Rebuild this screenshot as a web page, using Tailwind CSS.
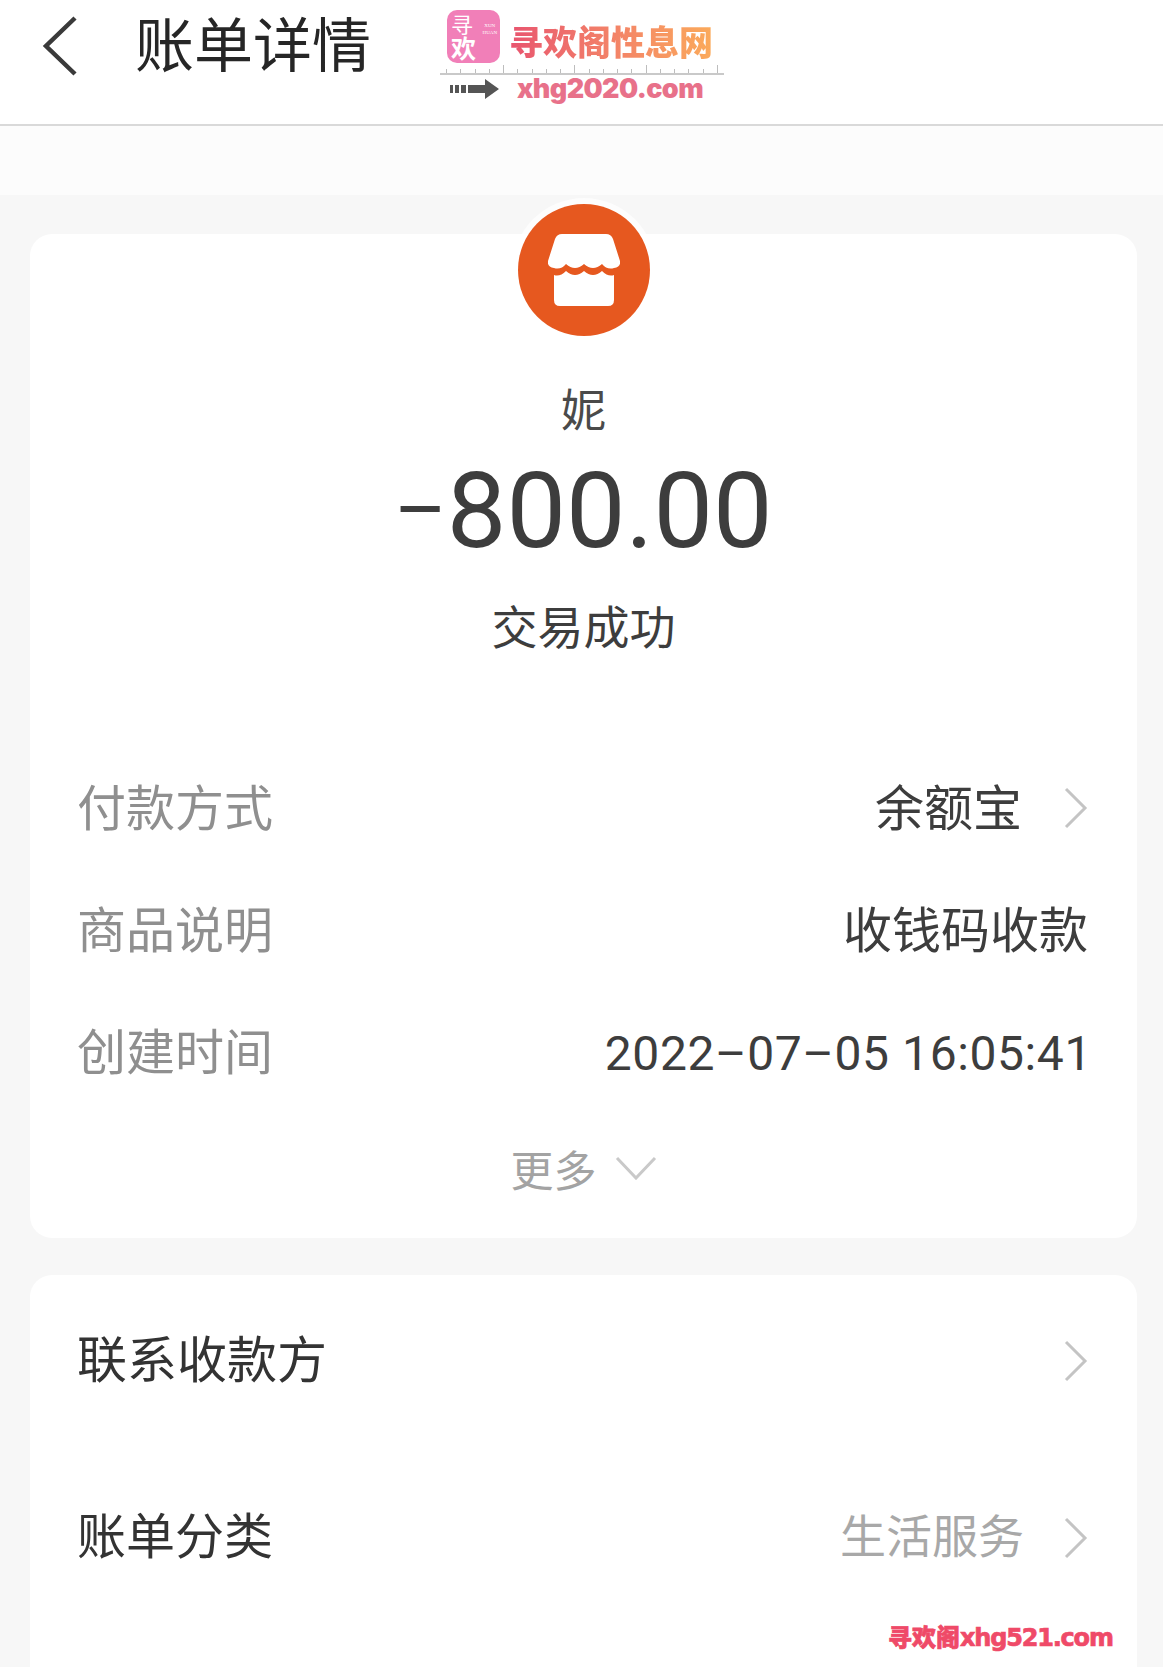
<!DOCTYPE html>
<html lang="zh-CN">
<head>
  <meta charset="UTF-8" />
  <meta name="viewport" content="width=device-width, initial-scale=1.0">
  <title>账单详情</title>
  <script src="https://cdn.jsdelivr.net/npm/@tailwindcss/browser@4"></script>
</head>
<body class="bg-[#f7f7f7] font-['Roboto','Noto_Sans_CJK_SC',sans-serif]">
  <div class="relative w-[1163px] h-[1667px] overflow-hidden">

    <!-- header -->
    <header class="h-[126px] bg-white border-b-2 border-[#d9d9d9] flex items-start pt-[11px]">
      <svg class="ml-[42px] mt-[5px] w-[36px] h-[60px]" viewBox="0 0 36 60" fill="none" stroke="#3a3a3a" stroke-width="4.5">
        <path d="M33 2 L4 30 L33 58" />
      </svg>
      <h1 class="ml-[57px] text-[59px] leading-[62px] text-[#262626] font-['Noto_Sans_CJK_SC',sans-serif]">账单详情</h1>
    </header>
    <div class="h-[69px] bg-[#fcfcfc]"></div>

    <!-- watermark logo -->
    <div class="absolute left-[440px] top-[10px] w-[284px]">
      <div class="flex items-center pl-[7px] gap-[9px]">
        <div class="relative w-[53px] h-[53px] rounded-[10px] bg-[#f17fb8] text-white font-['Noto_Sans_CJK_SC',sans-serif] flex flex-col pl-[4px] pt-[2px]">
          <span class="text-[22px] leading-[23px]">寻</span>
          <span class="text-[25px] leading-[25px] font-bold">欢</span>
          <span class="absolute right-[3px] top-[12px] text-[5px] leading-[7px] text-center font-['Liberation_Serif',serif]">XUN<br>HUAN</span>
        </div>
        <span class="mt-[9px] text-[34px] leading-[40px] font-black font-['Noto_Sans_CJK_SC',sans-serif] text-transparent bg-clip-text bg-gradient-to-r from-[#e8546f] to-[#fbaa5a] whitespace-nowrap">寻欢阁性息网</span>
      </div>
      <div class="mt-[4px] h-[8px] border-b-2 border-[#c9c9c9] flex justify-between items-end px-[6px]">
        <i class="block w-px h-[4px] bg-[#bdbdbd]"></i><i class="block w-px h-[4px] bg-[#bdbdbd]"></i><i class="block w-px h-[4px] bg-[#bdbdbd]"></i><i class="block w-px h-[4px] bg-[#bdbdbd]"></i><i class="block w-px h-[8px] bg-[#bdbdbd]"></i><i class="block w-px h-[4px] bg-[#bdbdbd]"></i><i class="block w-px h-[4px] bg-[#bdbdbd]"></i><i class="block w-px h-[4px] bg-[#bdbdbd]"></i><i class="block w-px h-[4px] bg-[#bdbdbd]"></i><i class="block w-px h-[8px] bg-[#bdbdbd]"></i><i class="block w-px h-[4px] bg-[#bdbdbd]"></i><i class="block w-px h-[4px] bg-[#bdbdbd]"></i><i class="block w-px h-[4px] bg-[#bdbdbd]"></i><i class="block w-px h-[4px] bg-[#bdbdbd]"></i><i class="block w-px h-[8px] bg-[#bdbdbd]"></i><i class="block w-px h-[4px] bg-[#bdbdbd]"></i><i class="block w-px h-[4px] bg-[#bdbdbd]"></i><i class="block w-px h-[4px] bg-[#bdbdbd]"></i><i class="block w-px h-[4px] bg-[#bdbdbd]"></i><i class="block w-px h-[8px] bg-[#bdbdbd]"></i>
      </div>
      <div class="flex items-center pl-[10px] -mt-[1px]">
        <svg class="w-[50px] h-[20px]" viewBox="0 0 50 20" fill="#555555">
          <path d="M0 6h3v8H0zM5 6h4v8H5zM11 6h5v8h-5zM18 6h17V0l14 10-14 10v-6H18z" />
        </svg>
        <span class="ml-[17px] text-[27px] leading-[30px] font-black text-[#e8718a] font-['Inter',sans-serif] tracking-[-0.6px]">xhg2020.com</span>
      </div>
    </div>

    <main class="pl-[30px] pr-[26px] pt-[39px]">
      <!-- bill card -->
      <section class="h-[1004px] bg-white rounded-[22px] flex flex-col">
        <div class="flex flex-col items-center">
          <div class="-mt-[30px] w-[132px] h-[132px] rounded-full bg-[#e6581f] ring-[6px] ring-white/70 flex items-center justify-center">
            <svg class="w-[72px] h-[72px]" viewBox="0 0 72 72">
              <path fill="#ffffff" d="M14 0H58Q63 0 65 5L72 27Q73 33 66 34Q59 36 54 30Q45 38 36 30Q27 38 18 30Q13 36 6 34Q-1 33 0 27L7 5Q9 0 14 0Z" />
              <path fill="#ffffff" d="M6 41Q12 43 18 37Q27 45 36 37Q45 45 54 37Q60 43 66 41V66Q66 72 60 72H12Q6 72 6 66Z" />
            </svg>
          </div>
          <p class="mt-[37px] text-[45px] leading-[70px] text-[#4a4a4a] font-['Noto_Sans_CJK_SC',sans-serif]">妮</p>
          <p class="mt-[8px] text-[106px] leading-[120px] text-[#3d3d3d]"><span class="inline-block -translate-y-[10px] text-[80px]">–</span>800.00</p>
          <p class="mt-[12px] text-[46px] leading-[64px] text-[#3d3d3d] font-['Noto_Sans_CJK_SC',sans-serif]">交易成功</p>
        </div>

        <dl class="mt-[88px] pl-[47px] pr-[49px] text-[49px] leading-[122px] font-['Noto_Sans_CJK_SC',sans-serif]">
          <div class="flex justify-between items-center">
            <dt class="text-[#8f8f8f]">付款方式</dt>
            <dd class="flex items-center text-[#3d3d3d]">余额宝
              <svg class="ml-[42px] w-[24px] h-[42px] translate-y-[3px]" viewBox="0 0 24 42" fill="none" stroke="#c4c4c4" stroke-width="3"><path d="M2 2 L21 21 L2 40" /></svg>
            </dd>
          </div>
          <div class="flex justify-between items-center">
            <dt class="text-[#8f8f8f]">商品说明</dt>
            <dd class="text-[#3d3d3d]">收钱码收款</dd>
          </div>
          <div class="flex justify-between items-center">
            <dt class="text-[#8f8f8f]">创建时间</dt>
            <dd class="text-[48px] text-[#3d3d3d] font-['Roboto',sans-serif] tracking-[0.6px] translate-x-[4px] translate-y-[5px]">2022–07–05 16:05:41</dd>
          </div>
        </dl>

        <div class="mt-[1px] flex justify-center items-center text-[43px] leading-[114px] text-[#a3a3a3] font-['Noto_Sans_CJK_SC',sans-serif]">
          更多
          <svg class="ml-[18px] w-[42px] h-[24px]" viewBox="0 0 42 24" fill="none" stroke="#c9c9c9" stroke-width="3"><path d="M2 2 L21 22 L40 2" /></svg>
        </div>
      </section>

      <!-- actions card -->
      <section class="mt-[37px] bg-white rounded-[22px] pl-[47px] pr-[49px] pt-[25px] h-[500px] text-[49px] font-['Noto_Sans_CJK_SC',sans-serif] text-[#333333]">
        <div class="h-[112px] flex justify-between items-center">
          <span class="text-[50px]">联系收款方</span>
          <svg class="w-[24px] h-[42px] translate-y-[5px]" viewBox="0 0 24 42" fill="none" stroke="#c4c4c4" stroke-width="3"><path d="M2 2 L21 21 L2 40" /></svg>
        </div>
        <div class="mt-[65px] h-[112px] flex justify-between items-center">
          <span>账单分类</span>
          <span class="flex items-center text-[#a8a8a8] text-[46px]">生活服务
            <svg class="ml-[40px] w-[24px] h-[42px] translate-y-[5px]" viewBox="0 0 24 42" fill="none" stroke="#c4c4c4" stroke-width="3"><path d="M2 2 L21 21 L2 40" /></svg>
          </span>
        </div>
      </section>
    </main>

    <!-- bottom watermark -->
    <div class="absolute left-[888px] top-[1620px] text-[24px] leading-[32px] font-black text-[#ef4a68] [-webkit-text-stroke:0.7px_#ef4a68] whitespace-nowrap font-['Noto_Sans_CJK_SC',sans-serif]">寻欢阁<span class="font-['DejaVu_Sans',sans-serif] font-bold tracking-[-1.2px]">xhg521.com</span></div>
  </div>
</body>
</html>
